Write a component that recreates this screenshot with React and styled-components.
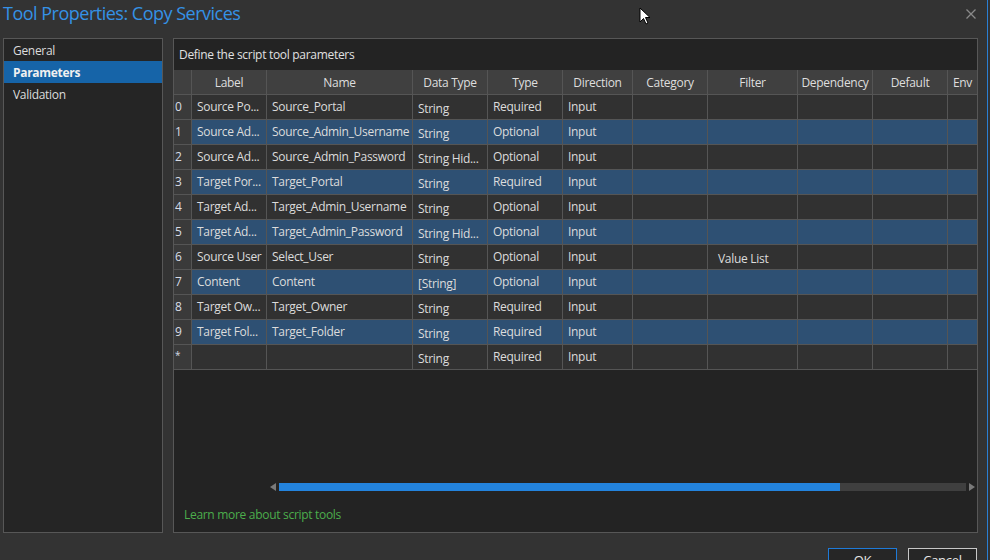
import React from 'react'
import styled, { createGlobalStyle } from 'styled-components'

const GlobalStyle = createGlobalStyle`
    html, body {
        margin: 0;
        padding: 0;
        background: #333333;
    }
    * {
        box-sizing: border-box;
    }
`;

const Dialog = styled.div`
    position: relative;
    width: 988px;
    height: 560px;
    overflow: hidden;
    background: #333333;
    border-right: 1px solid #2a7fd4;
    font-family: "Open Sans", "Noto Sans", sans-serif;
    font-size: 12px;
    letter-spacing: -0.3px;
    color: #dcdcdc;
    display: flex;
    flex-flow: column nowrap;
`;

const TitleBar = styled.div`
    height: 38px;
    flex: none;
    display: flex;
    align-items: flex-start;
    justify-content: space-between;
    padding: 0 10px 0 3px;

    h1 {
        margin: 0;
        font-weight: 400;
        font-size: 18px;
        letter-spacing: -0.5px;
        line-height: 27px;
        color: #3592e6;
    }
`;

const CloseButton = styled.div`
    margin-top: 7px;
    width: 12px;
    height: 12px;
    color: #8a8a8a;
`;

const Body = styled.div`
    flex: none;
    height: 495px;
    display: flex;
    flex-flow: row nowrap;
    gap: 10px;
    padding-left: 3px;
`;

const Nav = styled.div`
    width: 160px;
    background: #252525;
    border: 1px solid #575757;
    display: flex;
    flex-flow: column nowrap;
`;

const NavItem = styled.div`
    height: 22px;
    line-height: 23px;
    padding-left: 9px;
    color: ${p => (p.$active ? '#f0f0f0' : '#dcdcdc')};
    background: ${p => (p.$active ? '#1664a8' : 'transparent')};
    font-weight: ${p => (p.$active ? 700 : 400)};
`;

const Main = styled.div`
    width: 805px;
    background: #232323;
    border: 1px solid #575757;
    display: flex;
    flex-flow: column nowrap;
    overflow: hidden;
`;

const MainHeader = styled.div`
    height: 31px;
    flex: none;
    line-height: 32px;
    padding-left: 5px;
    color: #e0e0e0;
`;

const Grid = styled.div`
    display: grid;
    grid-template-columns: 18px 75px 146px 75px 75px 70px 75px 90px 75px 75px 30px;
    grid-auto-rows: 25px;
    width: 803px;
    overflow: hidden;
    flex: none;
`;

const HeadCell = styled.div`
    background: #404040;
    border-right: 1px solid #555555;
    border-bottom: 1px solid #555555;
    text-align: center;
    line-height: 26px;
    white-space: nowrap;
    overflow: hidden;
    color: #dedede;
`;

const RowHead = styled.div`
    background: #3a3a3a;
    border-right: 1px solid #555555;
    border-bottom: 1px solid #555555;
    padding-left: 1px;
    line-height: ${p => (p.$star ? '20px' : '24px')};
    color: #d8dde6;
    font-size: ${p => (p.$star ? '10px' : '12px')};
`;

const Cell = styled.div`
    background: ${p => (p.$alt ? '#2e5073' : '#313131')};
    border-right: 1px solid #555555;
    border-bottom: 1px solid #555555;
    padding-left: 5px;
    padding-top: ${p => (p.$combo ? '2px' : '0')};
    line-height: 24px;
    white-space: nowrap;
    overflow: hidden;
    color: #dcdcdc;
`;

const Spacer = styled.div`
    flex: 1;
`;

const ScrollBar = styled.div`
    display: flex;
    align-items: center;
    height: 8px;
    margin-left: 96px;
    margin-bottom: 15px;
    flex: none;
`;

const Arrow = styled.div`
    width: 0;
    height: 0;
    border-top: 4px solid transparent;
    border-bottom: 4px solid transparent;
    ${p => (p.$right
        ? 'border-left: 6px solid #7a7a7a; margin-left: 3px;'
        : 'border-right: 6px solid #7a7a7a; margin-right: 3px;')}
`;

const Track = styled.div`
    width: 687px;
    height: 8px;
    background: #3f3f3f;
    display: flex;
`;

const Thumb = styled.div`
    height: 8px;
    background: #2383dd;
`;

const LearnMore = styled.div`
    flex: none;
    padding: 0 0 9px 10px;
    color: #4cae4c;
    line-height: 17px;
`;

const Footer = styled.div`
    display: flex;
    justify-content: flex-end;
    gap: 11px;
    padding: 15px 10px 0 0;
`;

const Button = styled.div`
    width: 69px;
    height: 24px;
    line-height: 22px;
    text-align: center;
    background: #262626;
    border: 1px solid ${p => (p.$primary ? '#1e7ad8' : '#c8c8c8')};
    color: #e6e6e6;
    font-size: 13px;
`;

const Cursor = styled.svg`
    position: absolute;
    left: 639px;
    top: 7px;
`;

const columns = ['Label', 'Name', 'Data Type', 'Type', 'Direction', 'Category', 'Filter', 'Dependency', 'Default', 'Env']

const rows = [
    ['0', 'Source Po...', 'Source_Portal', 'String', 'Required', 'Input', '', ''],
    ['1', 'Source Ad...', 'Source_Admin_Username', 'String', 'Optional', 'Input', '', ''],
    ['2', 'Source Ad...', 'Source_Admin_Password', 'String Hid...', 'Optional', 'Input', '', ''],
    ['3', 'Target Por...', 'Target_Portal', 'String', 'Required', 'Input', '', ''],
    ['4', 'Target Ad...', 'Target_Admin_Username', 'String', 'Optional', 'Input', '', ''],
    ['5', 'Target Ad...', 'Target_Admin_Password', 'String Hid...', 'Optional', 'Input', '', ''],
    ['6', 'Source User', 'Select_User', 'String', 'Optional', 'Input', '', 'Value List'],
    ['7', 'Content', 'Content', '[String]', 'Optional', 'Input', '', ''],
    ['8', 'Target Ow...', 'Target_Owner', 'String', 'Required', 'Input', '', ''],
    ['9', 'Target Fol...', 'Target_Folder', 'String', 'Required', 'Input', '', ''],
    ['*', '', '', 'String', 'Required', 'Input', '', ''],
]

export default function App() {
    return (
        <Dialog>
            <GlobalStyle />
            <TitleBar>
                <h1>Tool Properties: Copy Services</h1>
                <CloseButton>
                    <svg width="12" height="12" viewBox="0 0 12 12">
                        <path d="M1.5 1.5 L10.5 10.5 M10.5 1.5 L1.5 10.5" stroke="currentColor" strokeWidth="1.3" />
                    </svg>
                </CloseButton>
            </TitleBar>
            <Body>
                <Nav>
                    <NavItem>General</NavItem>
                    <NavItem $active>Parameters</NavItem>
                    <NavItem>Validation</NavItem>
                </Nav>
                <Main>
                    <MainHeader>Define the script tool parameters</MainHeader>
                    <Grid>
                        <HeadCell />
                        {columns.map(c => <HeadCell key={c}>{c}</HeadCell>)}
                        {rows.map((r, i) => {
                            const alt = i % 2 === 1 && r[0] !== '*'
                            return (
                                <React.Fragment key={i}>
                                    <RowHead $star={r[0] === '*'}>{r[0]}</RowHead>
                                    <Cell $alt={alt}>{r[1]}</Cell>
                                    <Cell $alt={alt}>{r[2]}</Cell>
                                    <Cell $alt={alt} $combo>{r[3]}</Cell>
                                    <Cell $alt={alt}>{r[4]}</Cell>
                                    <Cell $alt={alt}>{r[5]}</Cell>
                                    <Cell $alt={alt}>{r[6]}</Cell>
                                    <Cell $alt={alt} $combo>{r[7] ? <span style={{ paddingLeft: 5 }}>{r[7]}</span> : null}</Cell>
                                    <Cell $alt={alt} />
                                    <Cell $alt={alt} />
                                    <Cell $alt={alt} />
                                </React.Fragment>
                            )
                        })}
                    </Grid>
                    <Spacer />
                    <ScrollBar>
                        <Arrow />
                        <Track>
                            <Thumb style={{ width: `${(561 / 687) * 100}%` }} />
                        </Track>
                        <Arrow $right />
                    </ScrollBar>
                    <LearnMore>Learn more about script tools</LearnMore>
                </Main>
            </Body>
            <Footer>
                <Button $primary>OK</Button>
                <Button>Cancel</Button>
            </Footer>
            <Cursor width="13" height="20" viewBox="0 0 13 20">
                <path d="M1 1 L1 15 L4.5 11.5 L7 17 L9 16 L6.5 10.5 L11 10.5 Z" fill="#fff" stroke="#000" strokeWidth="1" />
            </Cursor>
        </Dialog>
    )
}
